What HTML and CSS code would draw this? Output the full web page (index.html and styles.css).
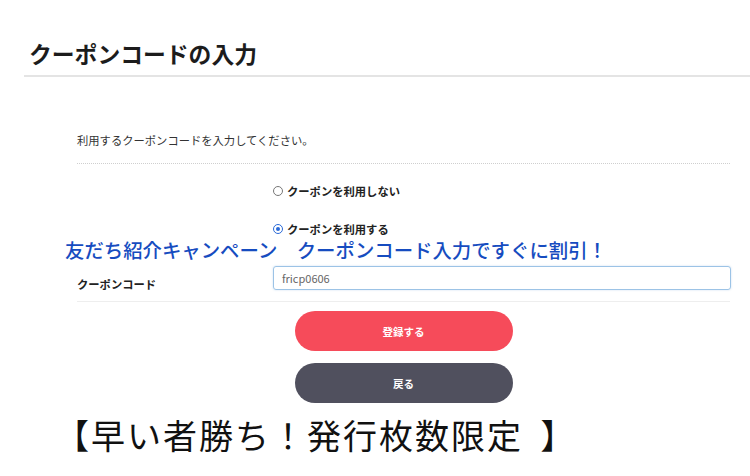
FILE: index.html
```html
<!DOCTYPE html>
<html lang="ja">
  <head>
    <meta charset="utf-8">
    <title>クーポンコードの入力</title>
    <link rel="stylesheet" href="styles.css">
  </head>
  <body>
    <div class="page-head">
      <h1>クーポンコードの入力</h1>
    </div>

    <div class="coupon-form">
      <p class="lead">利用するクーポンコードを入力してください。</p>

      <div class="choices">
        <label class="choice"><span class="radio"></span>クーポンを利用しない</label>
        <label class="choice"><span class="radio checked"></span>クーポンを利用する</label>
      </div>

      <div class="code-row">
        <span class="code-label">クーポンコード</span>
        <div class="code-field">fricp0606</div>
      </div>

      <div class="actions">
        <button class="btn btn-submit">登録する</button>
        <button class="btn btn-back">戻る</button>
      </div>
    </div>

    <p class="promo">【早い者勝ち！発行枚数限定 】</p>

    <p class="banner">友だち紹介キャンペーン　クーポンコード入力ですぐに割引！</p>
  </body>
</html>
```

FILE: styles.css
```css
html, body { margin: 0; }
body {
  font-family: "Noto Sans CJK JP", "Noto Sans", sans-serif;
  color: #222;
  background: #fff;
  width: 750px;
  height: 476px;
  overflow: hidden;
  position: relative;
}

.page-head {
  margin-left: 24px;
  padding: 39px 0 6px 5px;
  border-bottom: 2px solid #e4e4e4;
}
.page-head h1 {
  margin: 0;
  font-size: 22.8px;
  line-height: 30px;
  font-weight: 700;
  color: #1c1c1c;
}

.coupon-form { margin: 0 20px 0 77px; }

.lead {
  margin: 0;
  padding: 53px 0 13px;
  font-size: 11.3px;
  line-height: 20px;
  color: #333;
  border-bottom: 1px dotted #cfcfcf;
}

.choices {
  padding: 17px 0 0 196px;
  display: flex;
  flex-direction: column;
  gap: 18px;
}
.choice {
  display: flex;
  align-items: center;
  gap: 4px;
  font-size: 11.3px;
  line-height: 20px;
  font-weight: 700;
  color: #222;
}
.radio {
  width: 8px;
  height: 8px;
  border: 1px solid #777;
  border-radius: 50%;
  box-sizing: content-box;
  position: relative;
}
.radio.checked { border-color: #2a6ad8; }
.radio.checked::after {
  content: "";
  position: absolute;
  left: 2px;
  top: 2px;
  width: 4px;
  height: 4px;
  border-radius: 50%;
  background: #2a6ad8;
}

.code-row {
  display: flex;
  margin-top: 27px;
  padding-bottom: 9px;
  border-bottom: 1px solid #eee;
}
.code-label {
  width: 196px;
  padding-top: 10px;
  font-size: 11.3px;
  line-height: 16px;
  font-weight: 700;
}
.code-field {
  flex: 1;
  height: 24px;
  margin-right: -1px;
  box-sizing: border-box;
  border: 1px solid #9cc3e6;
  border-radius: 3px;
  box-shadow: 0 0 2px rgba(90, 150, 210, 0.35);
  padding: 0 8px;
  font-size: 11px;
  line-height: 22px;
  color: #666;
}

.actions {
  display: flex;
  flex-direction: column;
  align-items: center;
  gap: 12px;
  margin-top: 9px;
}
.btn {
  width: 218px;
  height: 40px;
  border: 0;
  border-radius: 20px;
  font-family: inherit;
  font-size: 10.5px;
  font-weight: 700;
  color: #fff;
}
.btn-submit { background: #f64b5a; }
.btn-back { background: #50505e; }

.promo {
  margin: 12px 0 0 55px;
  font-size: 34px;
  line-height: 40px;
  letter-spacing: 2px;
  word-spacing: 8px;
  color: #111;
}

.banner {
  position: absolute;
  left: 65px;
  top: 236px;
  margin: 0;
  font-size: 19.4px;
  line-height: 28px;
  font-weight: 500;
  color: #164cc0;
  white-space: nowrap;
}
```
